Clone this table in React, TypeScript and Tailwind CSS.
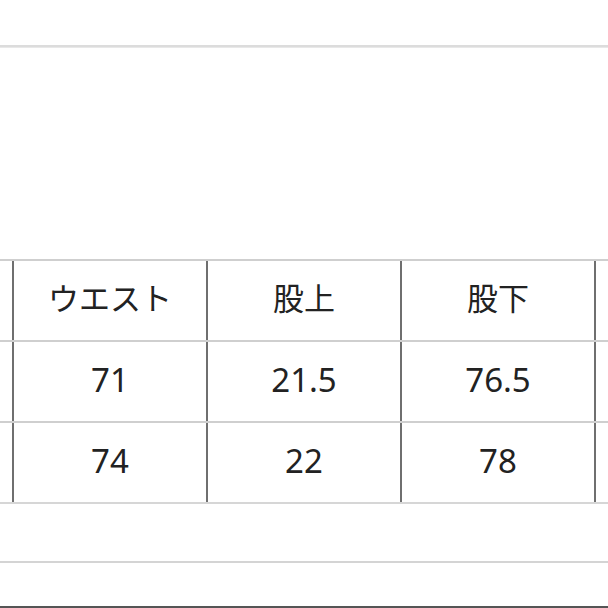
import React from 'react';

const header = ['', 'ウエスト', '股上', '股下', ''];
const body = [
  ['', '71', '21.5', '76.5', ''],
  ['', '74', '22', '78', ''],
];

function Row({ cells, size, last }: { cells: string[]; size: string; last?: boolean }) {
  return (
    <div className={`flex border-b-2 ${last ? 'border-[#d6d6d6]' : 'border-[#cfcfcf]'}`}>
      {cells.map((cell, j) => (
        <div
          key={j}
          className={`w-[194px] h-[79px] shrink-0 border-r-2 border-[#6f6f6f] flex items-center justify-center leading-none pb-[4px] ${size}`}
        >
          {cell}
        </div>
      ))}
    </div>
  );
}

export default function App() {
  return (
    <div
      className="w-[608px] h-[608px] bg-white overflow-hidden flex flex-col text-[#222]"
      style={{ fontFamily: '"Noto Sans", "Noto Sans CJK JP", sans-serif' }}
    >
      <div className="h-[45px] shrink-0 bg-white" />
      <div className="h-[3px] shrink-0 bg-[#dcdcdc] border-b border-[#e8e8e8]" />
      <div className="h-[211px] shrink-0" />

      <div className="ml-[-180px] flex flex-col border-t-2 border-[#cfcfcf]">
        <Row cells={header} size="text-[31px]" />
        {body.map((row, i) => (
          <Row key={i} cells={row} size="text-[33px]" last={i === body.length - 1} />
        ))}
      </div>

      <div className="h-[57px] shrink-0" />
      <div className="h-[2px] shrink-0 bg-[#d4d4d4]" />
      <div className="flex-1" />
      <div className="h-[2px] shrink-0 bg-[#555]" />
    </div>
  );
}
